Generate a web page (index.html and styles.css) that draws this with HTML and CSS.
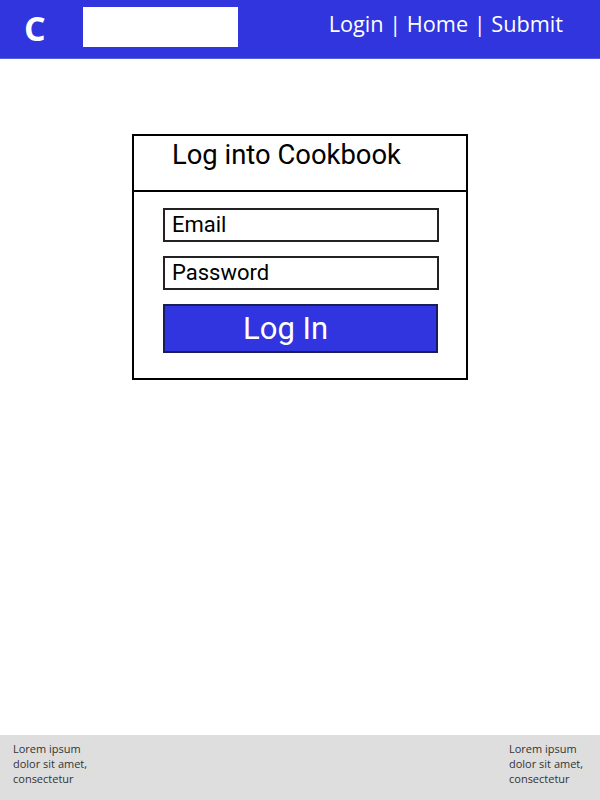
FILE: index.html
```html
<!DOCTYPE html>
<html>
<head>
<meta charset="utf-8">
<link rel="stylesheet" href="styles.css">
</head>
<body>
<div class="page">
  <header class="topbar">
    <div class="logo">C</div>
    <div class="searchbox"></div>
    <nav class="nav">Login | Home | Submit</nav>
  </header>
  <main class="main">
    <div class="card">
      <div class="card-head">Log into Cookbook</div>
      <div class="card-body">
        <div class="field">Email</div>
        <div class="field">Password</div>
        <div class="btn">Log In</div>
      </div>
    </div>
  </main>
  <footer class="footer">
    <div class="foot-text">Lorem ipsum dolor sit amet, consectetur</div>
    <div class="foot-text">Lorem ipsum dolor sit amet, consectetur</div>
  </footer>
</div>
</body>
</html>
```
FILE: styles.css
```css
html, body {
  margin: 0;
  padding: 0;
  background: #fff;
}
.page {
  min-height: 800px;
  display: flex;
  flex-direction: column;
}
.topbar {
  height: 58px;
  background: #3035dd;
  border-bottom: 1px solid #5a5ee4;
  display: flex;
  align-items: flex-start;
  font-family: "Open Sans", sans-serif;
  color: #fff;
}
.logo {
  font-weight: 700;
  font-size: 34px;
  line-height: 46px;
  margin-top: 5px;
  margin-left: 24px;
}
.searchbox {
  width: 155px;
  height: 40px;
  background: #fff;
  margin-top: 7px;
  margin-left: 37px;
}
.nav {
  margin-left: auto;
  margin-right: 37px;
  margin-top: 9px;
  font-size: 21.7px;
  line-height: 30px;
}
.main {
  flex: 1;
}
.card {
  width: 336px;
  box-sizing: border-box;
  margin: 75px auto 0;
  border: 2px solid #000;
  font-family: Roboto, sans-serif;
}
.card-head {
  height: 56px;
  box-sizing: border-box;
  border-bottom: 2px solid #000;
  padding: 4px 0 0 38px;
  font-size: 27.4px;
  line-height: 30px;
  color: #000;
}
.card-body {
  padding: 16px 0 25px 29px;
  display: flex;
  flex-direction: column;
  gap: 14px;
}
.field {
  width: 276px;
  height: 34px;
  box-sizing: border-box;
  border: 2px solid #222;
  padding-left: 7px;
  font-size: 22px;
  line-height: 30px;
  color: #000;
}
.btn {
  width: 275px;
  height: 49px;
  box-sizing: border-box;
  background: #3035e0;
  border: 2px solid #1a1d5c;
  color: #fff;
  font-size: 31px;
  line-height: 45px;
  padding-left: 78px;
}
.footer {
  height: 65px;
  background: #dedede;
  display: flex;
  justify-content: space-between;
  padding: 6px 13px 0;
  box-sizing: border-box;
  font-family: "Open Sans", sans-serif;
  font-size: 11px;
  line-height: 15px;
  color: #333;
}
.foot-text {
  width: 78px;
}
```
